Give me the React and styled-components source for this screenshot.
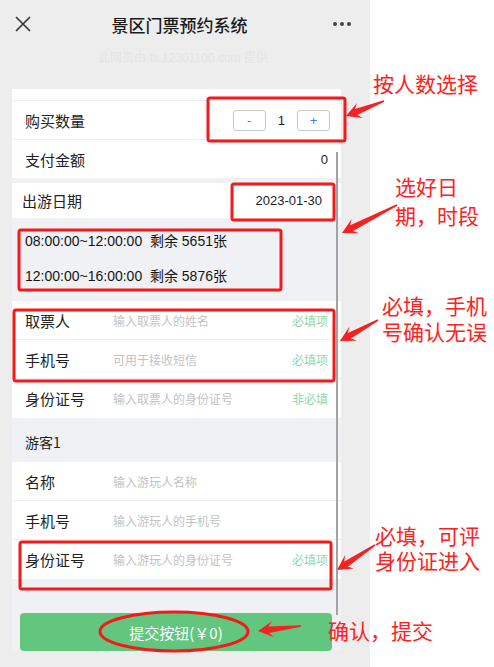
import React from "react";
import styled, { createGlobalStyle } from "styled-components";

const GlobalStyle = createGlobalStyle`
  html, body { margin: 0; padding: 0; background: #ffffff; }
  body { font-family: "Noto Sans CJK SC", "Noto Sans", sans-serif; }
  * { box-sizing: border-box; }
`;

const Stage = styled.div`
  position: relative;
  width: 494px;
  height: 667px;
  display: flex;
  background: #ffffff;
  overflow: hidden;
`;

const Phone = styled.div`
  width: 370px;
  height: 667px;
  background: #ededed;
  display: flex;
  flex-direction: column;
`;

const Header = styled.div`
  height: 48px;
  display: flex;
  align-items: center;
  justify-content: space-between;
  padding: 0 18px 0 15px;
`;

const Title = styled.div`
  flex: 1;
  text-align: center;
  font-size: 17px;
  font-weight: 500;
  color: #1b1b1b;
  margin-left: -4px;
`;

const Provider = styled.div`
  height: 20px;
  line-height: 20px;
  text-align: center;
  font-family: "Liberation Sans", "Noto Sans CJK SC", sans-serif;
  font-size: 12px;
  color: #e4e4e4;
  margin-bottom: 21px;
  padding-right: 4px;
`;

const Panel = styled.div`
  position: relative;
  margin-left: 12px;
  width: 329px;
  height: 562px;
  background: #eff1f4;
  display: flex;
  flex-direction: column;
`;

const TopStrip = styled.div`
  height: 12px;
  background: #fff;
  border-bottom: 1px solid #e9ecf0;
`;

const Row = styled.div`
  height: ${(p) => p.$h || 39}px;
  display: flex;
  align-items: center;
  padding: 0 ${(p) => p.$pr || 13}px 0 ${(p) => p.$pl || 13}px;
  background: #fff;
  border-bottom: ${(p) => (p.$line ? "1px solid #eaedf1" : "none")};
  margin-top: ${(p) => p.$mt || 0}px;
`;

const Label = styled.div`
  width: ${(p) => p.$w || 88}px;
  font-size: 15px;
  color: #222;
  flex: ${(p) => (p.$grow ? 1 : "none")};
`;

const Placeholder = styled.div`
  flex: 1;
  font-size: 12px;
  color: #c3c3c3;
`;

const Hint = styled.div`
  font-size: 12px;
  color: #92d7a4;
`;

const Value = styled.div`
  font-family: "Liberation Sans", Arial, sans-serif;
  font-size: ${(p) => p.$size || 13}px;
  color: #222;
`;

const Stepper = styled.div`
  display: flex;
  align-items: center;
  gap: 12px;
`;

const StepButton = styled.div`
  width: 33px;
  height: 21px;
  border: 1px solid #c9c9c9;
  border-radius: 3px;
  background: #fff;
  color: #3d7ee0;
  font-family: "Liberation Sans", Arial, sans-serif;
  font-size: 13px;
  display: flex;
  align-items: center;
  justify-content: center;
`;

const Slots = styled.div`
  height: 81px;
  padding: 6px 13px 0;
  margin-bottom: 2px;
`;

const Slot = styled.div`
  height: 35px;
  line-height: 35px;
  font-family: "Liberation Sans", "Noto Sans CJK SC", sans-serif;
  font-size: 14px;
  color: #151515;
  white-space: pre;
`;

const GroupHeader = styled.div`
  height: 44px;
  display: flex;
  align-items: center;
  padding: 3px 13px 0;
  font-size: 14px;
  color: #222;
`;

const ButtonArea = styled.div`
  flex: 1;
  display: flex;
  align-items: flex-end;
  padding: 0 9px 0 8px;
`;

const SubmitButton = styled.div`
  width: 312px;
  height: 38px;
  border-radius: 4px;
  background: #63c67e;
  color: #fff;
  font-size: 15px;
  display: flex;
  align-items: center;
  justify-content: center;
`;

const Scrollbar = styled.div`
  position: absolute;
  left: 324px;
  top: 63px;
  width: 2px;
  height: 463px;
  background: #a3a3a3;
`;

const Overlay = styled.svg`
  position: absolute;
  left: 0;
  top: 0;
  pointer-events: none;
`;

const Note = styled.div`
  position: absolute;
  left: ${(p) => p.$x}px;
  top: ${(p) => p.$y}px;
  font-size: 21px;
  line-height: ${(p) => p.$lh || 26}px;
  color: #ff2020;
  white-space: pre;
  pointer-events: none;
`;

function arrowPoints(x1, y1, x2, y2) {
  const dx = x1 - x2;
  const dy = y1 - y2;
  const L = Math.hypot(dx, dy);
  const ux = dx / L;
  const uy = dy / L;
  const nx = -uy;
  const ny = ux;
  const p = (u, v) => [x2 + ux * u + nx * v, y2 + uy * u + ny * v];
  const hl = 15;
  const pts = [
    p(0, 0),
    p(hl, 8),
    p(hl * 0.72, 3.2),
    p(L, 0.8),
    p(L, -0.8),
    p(hl * 0.72, -3.2),
    p(hl, -8),
  ];
  return pts.map((q) => q.map((n) => n.toFixed(1)).join(",")).join(" ");
}

const arrows = [
  [384, 101, 346, 116],
  [397, 205, 342, 233],
  [378, 320, 340, 341],
  [375, 545, 337, 570],
  [301, 626, 258, 631],
];

const boxes = [
  [208, 98, 137, 43],
  [232, 184, 102, 36],
  [19, 230, 262, 60],
  [14, 310, 320, 71],
  [20, 542, 311, 47],
];

export default function App() {
  return (
    <>
      <GlobalStyle />
      <Stage>
        <Phone>
          <Header>
            <svg width="16" height="16" viewBox="0 0 16 16">
              <path d="M1 1 L15 15 M15 1 L1 15" stroke="#333" strokeWidth="1.6" fill="none" />
            </svg>
            <Title>景区门票预约系统</Title>
            <svg width="20" height="6" viewBox="0 0 20 6">
              <circle cx="3" cy="3" r="2" fill="#444" />
              <circle cx="10" cy="3" r="2" fill="#444" />
              <circle cx="17" cy="3" r="2" fill="#444" />
            </svg>
          </Header>
          <Provider>此网页由 fx.12301100.com 提供</Provider>
          <Panel>
            <TopStrip />
            <Row $line $pr={11}>
              <Label $grow>购买数量</Label>
              <Stepper>
                <StepButton>-</StepButton>
                <Value>1</Value>
                <StepButton>+</StepButton>
              </Stepper>
            </Row>
            <Row $h={38}>
              <Label $grow>支付金额</Label>
              <Value>0</Value>
            </Row>
            <Row $h={35} $mt={5} $pl={10} $pr={19}>
              <Label $grow>出游日期</Label>
              <Value>2023-01-30</Value>
            </Row>
            <Slots>
              <Slot>08:00:00~12:00:00  剩余 5651张</Slot>
              <Slot>12:00:00~16:00:00  剩余 5876张</Slot>
            </Slots>
            <Row $line>
              <Label>取票人</Label>
              <Placeholder>输入取票人的姓名</Placeholder>
              <Hint>必填项</Hint>
            </Row>
            <Row $line>
              <Label>手机号</Label>
              <Placeholder>可用于接收短信</Placeholder>
              <Hint>必填项</Hint>
            </Row>
            <Row>
              <Label>身份证号</Label>
              <Placeholder>输入取票人的身份证号</Placeholder>
              <Hint>非必填</Hint>
            </Row>
            <GroupHeader>游客1</GroupHeader>
            <Row $line>
              <Label>名称</Label>
              <Placeholder>输入游玩人名称</Placeholder>
            </Row>
            <Row $line>
              <Label>手机号</Label>
              <Placeholder>输入游玩人的手机号</Placeholder>
            </Row>
            <Row>
              <Label>身份证号</Label>
              <Placeholder>输入游玩人的身份证号</Placeholder>
              <Hint>必填项</Hint>
            </Row>
            <ButtonArea>
              <SubmitButton>提交按钮(￥0)</SubmitButton>
            </ButtonArea>
            <Scrollbar />
          </Panel>
        </Phone>

        <Overlay width="494" height="667" viewBox="0 0 494 667">
          {boxes.map(([x, y, w, h], i) => (
            <rect key={i} x={x} y={y} width={w} height={h} rx="2" fill="none" stroke="#f21a1a" strokeWidth="3" />
          ))}
          <ellipse cx="174" cy="631.5" rx="74" ry="19.5" fill="none" stroke="#f21a1a" strokeWidth="3" />
          {arrows.map(([x1, y1, x2, y2], i) => (
            <polygon key={i} points={arrowPoints(x1, y1, x2, y2)} fill="#f52222" />
          ))}
        </Overlay>
        <Note $x={373} $y={70}>按人数选择</Note>
        <Note $x={395} $y={172} $lh={29}>{"选好日\n期，时段"}</Note>
        <Note $x={382} $y={292}>{"必填，手机\n号确认无误"}</Note>
        <Note $x={375} $y={523} $lh={25}>{"必填，可评\n身份证进入"}</Note>
        <Note $x={328} $y={617}>确认，提交</Note>
      </Stage>
    </>
  );
}
